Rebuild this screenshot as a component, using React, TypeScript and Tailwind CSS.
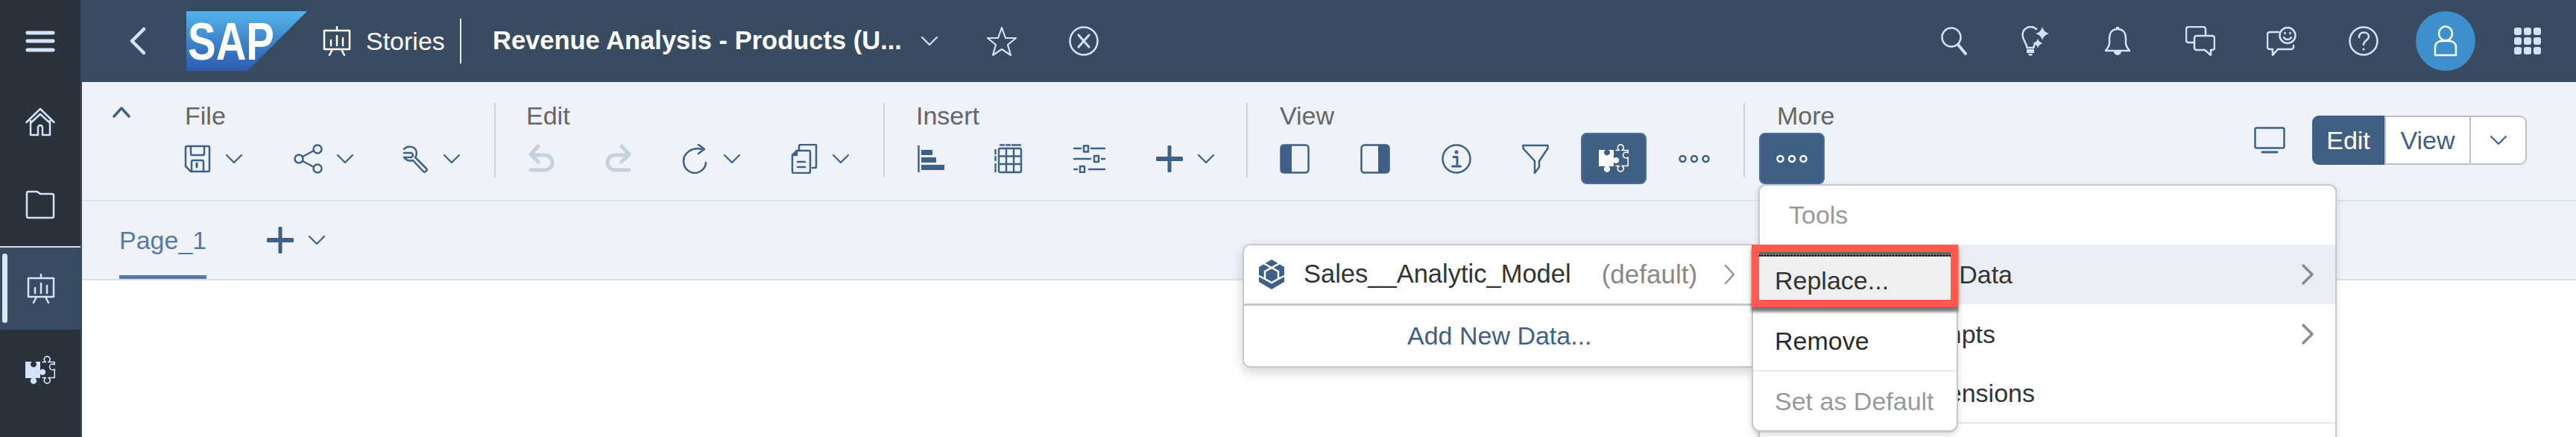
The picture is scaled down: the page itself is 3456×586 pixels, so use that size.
import type { ReactNode } from "react";

// Small wrapper so every drawn icon shares the same stroke defaults
const Ico = ({ w = 40, h = 40, sw = 2.5, className = "", children }: { w?: number; h?: number; sw?: number; className?: string; children: ReactNode }) => (
  <svg width={w} height={h} viewBox={`0 0 ${w} ${h}`} fill="none" stroke="currentColor" strokeWidth={sw} strokeLinecap="round" strokeLinejoin="round" className={`shrink-0 ${className}`}>
    {children}
  </svg>
);

const ChevDown = ({ className = "text-[#3f6086]" }: { className?: string }) => (
  <Ico w={24} h={14} sw={2.2} className={className}><path d="M2 2l10 10L22 2" /></Ico>
);

const Puzzle = () => (
  <Ico sw={1.6}>
    <path fill="currentColor" stroke="none" d="M0 8H9A4 4 0 1 0 13 8H20V19.500A4 4 0 1 1 20 24.500V30H13A4.200 4.200 0 1 1 9 30H0Z" />
    <path d="M23 8.500H27.500A4 4 0 1 1 31 8.500H39.200V12A4 4 0 1 0 39.200 18V29.500H31A4 4 0 1 1 27.500 29.500H23" />
  </Ico>
);

const Presentation = () => (
  <Ico w={38}>
    <path d="M19 1v4M2 6h34v25H2zM11 19v7M19 13v13M27 16v10M13 31l-4 8M25 31l4 8" />
  </Ico>
);

const Save = () => (
  <Ico w={36} h={38}>
    <path d="M2 4a2 2 0 0 1 2-2h28a2 2 0 0 1 2 2v30a2 2 0 0 1-2 2H9l-7-7z" />
    <path d="M9 3v9a2 2 0 0 0 2 2h14a2 2 0 0 0 2-2V3M10 36V23a2 2 0 0 1 2-2h12a2 2 0 0 1 2 2v13" />
    <path d="M17 25v5" strokeWidth={3} />
  </Ico>
);

const Share = () => (
  <Ico w={40}>
    <circle cx="7" cy="20" r="5.5" /><circle cx="32" cy="7" r="5.5" /><circle cx="32" cy="33" r="5.5" />
    <path d="M12 17l15-8M12 23l15 8" />
  </Ico>
);

const Wrench = () => (
  <Ico w={36} h={38}>
    <path d="M3 6C7 1 19 1 20 11c0 2-.5 4-2 6l15 15a2 2 0 0 1 0 3l-1 1a2 2 0 0 1-3 0L15 21c-4 1-9 0-12-4h9a3 3 0 0 0 0-6H3" />
  </Ico>
);

const Undo = () => (
  <Ico w={36} sw={5} className="text-[#c6d1dd]"><path d="M14 3L4 14l10 10M5 15h18a9 9 0 0 1 0 20H4" /></Ico>
);
const Redo = () => (
  <Ico w={36} sw={5} className="text-[#c6d1dd]"><path d="M22 3l10 11-10 10M31 15H13a9 9 0 0 0 0 20h19" /></Ico>
);

const Refresh = () => (
  <Ico w={36}>
    <path d="M26 7C14 4 2 12 2 23c0 9 7 16 15 16s15-7 15-14" />
    <path d="M22 1l8 6-8 6" />
  </Ico>
);

const Copy = () => (
  <Ico w={36}>
    <path d="M2 15l6-6h16a2 2 0 0 1 2 2v26a2 2 0 0 1-2 2H4a2 2 0 0 1-2-2z" />
    <path d="M11 9V3a2 2 0 0 1 2-2h20a1 1 0 0 1 1 1v29a1 1 0 0 1-1 1h-4" />
    <path d="M8 9v6H2" fill="currentColor" />
    <path d="M9 24h10M9 31h10" />
  </Ico>
);

const BarsIcon = () => (
  <Ico w={36} h={36}>
    <path d="M1.5 1v34" />
    <path fill="currentColor" stroke="none" d="M5 6h15v7H5zM5 16h20v7H5zM5 26h31v7H5z" />
  </Ico>
);

const TableIcon = () => (
  <Ico w={38} h={40} sw={2.4}>
    <rect x="6" y="6" width="30" height="32" rx="2" />
    <path d="M16 6v32M26 6v32M6 16.5h30M6 27h30" />
    <path d="M8 1.5h5M16 1.5h5M24 1.5h5M31 1.5h4M1.5 8v5M1.5 17v5M1.5 27v5M1.5 34v3" />
  </Ico>
);

const Sliders = () => (
  <Ico w={44} h={38}>
    <path d="M1 5h9M24 5h18M1 19h22M38 19h4M1 33h4M21 33h21" />
    <rect x="14" y="1.5" width="6" height="8" /><rect x="28" y="15" width="6" height="8" /><rect x="9" y="29" width="6" height="8" />
  </Ico>
);

const PlusIcon = () => (
  <svg width="36" height="36" viewBox="0 0 36 36" className="shrink-0 text-[#3f6086]" fill="currentColor">
    <rect x="0" y="15" width="36" height="6" rx="1.5" /><rect x="15.5" y="0" width="5" height="36" rx="1.5" />
  </svg>
);

const PanelLeft = () => (
  <Ico>
    <rect x="1.5" y="1.5" width="37" height="37" rx="4" />
    <path fill="currentColor" stroke="none" d="M5 1.5h11v37H5a3.5 3.5 0 0 1-3.500-3.500v-30A3.500 3.500 0 0 1 5 1.500z" />
  </Ico>
);
const PanelRight = () => (
  <Ico>
    <rect x="1.5" y="1.5" width="37" height="37" rx="4" />
    <path fill="currentColor" stroke="none" d="M35 1.5H24v37h11a3.500 3.500 0 0 0 3.500-3.500v-30A3.500 3.500 0 0 0 35 1.500z" />
  </Ico>
);

const Info = () => (
  <Ico>
    <circle cx="20" cy="20" r="18.500" />
    <circle cx="20" cy="11" r="2.500" fill="currentColor" stroke="none" />
    <path d="M16 17.500h5v12M14.500 30h11" strokeWidth={3} />
  </Ico>
);

const Funnel = () => (
  <Ico w={36}>
    <path d="M1.500 2h33v4L23 23v8l-6 8V23L1.500 6z" />
  </Ico>
);

const Dots = () => (
  <Ico w={42} h={14}>
    <circle cx="5.500" cy="7" r="4" /><circle cx="21" cy="7" r="4" /><circle cx="36.500" cy="7" r="4" />
  </Ico>
);

const Monitor = () => (
  <Ico w={42} h={36}>
    <rect x="1.500" y="1.500" width="39" height="27" rx="2" />
    <path d="M11 34h20" strokeWidth={3} />
  </Ico>
);

const Sparkle = ({ x, y, r }: { x: number; y: number; r: number }) => (
  <path fill="currentColor" stroke="none" d={`M${x} ${y - r}Q${x + r * 0.2} ${y - r * 0.2} ${x + r} ${y}Q${x + r * 0.2} ${y + r * 0.2} ${x} ${y + r}Q${x - r * 0.2} ${y + r * 0.2} ${x - r} ${y}Q${x - r * 0.2} ${y - r * 0.2} ${x} ${y - r}z`} />
);

// One toolbar tool: the fixed width keeps the icons on the same rhythm as the original ribbon
const Tool = ({ width, icon, chevron }: { width: string; icon: ReactNode; chevron?: boolean }) => (
  <div className={`flex items-center h-[40px] ${width}`}>
    <div className="w-[40px] flex items-center justify-center text-[#3f6086]">{icon}</div>
    {chevron && <div className="ml-[17px]"><ChevDown /></div>}
  </div>
);

const Sep = () => <div className="w-[2px] h-[100px] mt-[28px] bg-[#cdd2d9] shrink-0" />;

const Label = ({ children }: { children: ReactNode }) => (
  <div className="h-[40px] leading-[40px] text-[34px] text-[#666666]">{children}</div>
);

const HeaderIcon = ({ box, children }: { box: string; children: ReactNode }) => (
  <div className={`flex items-center justify-center ${box}`}>{children}</div>
);

export default function App() {
  return (
    <div className="relative w-[3456px] h-[586px] overflow-hidden flex bg-white font-['Liberation_Sans',sans-serif]">
      {/* Left rail */}
      <aside className="w-[110px] shrink-0 bg-[#2a323b] text-[#d1e4fb] flex flex-col border-r-[2px] border-[#3a4a60]">
        <div className="h-[110px] flex items-center justify-center">
          <Ico h={30} sw={5}><path d="M3 4h34M3 15h34M3 27h34" /></Ico>
        </div>
        <div className="h-[108px] flex items-center justify-center">
          <Ico>
            <path d="M1.500 20L20 2l18.500 18" />
            <path d="M7 18v19h10V27a3 3 0 0 1 6 0v10h10V18M20 9L7 21M20 9l13 12" />
          </Ico>
        </div>
        <div className="h-[112px] flex items-center justify-center">
          <Ico>
            <path d="M2 5a2 2 0 0 1 2-2h12l4 3h16a2 2 0 0 1 2 2v28a2 2 0 0 1-2 2H4a2 2 0 0 1-2-2z" />
          </Ico>
        </div>
        <div className="h-[2px] bg-[#dcdcdc]" />
        <div className="h-[110px] bg-[#394b61] -mr-[2px] flex items-center justify-center relative">
          <div className="absolute left-[3px] top-[8px] w-[7px] h-[93px] rounded-full bg-[#d9e8fb]" />
          <Presentation />
        </div>
        <div className="h-[110px] flex items-center justify-center">
          <Puzzle />
        </div>
      </aside>

      <main className="flex-1 flex flex-col min-w-0">
        {/* Shell bar */}
        <header className="h-[110px] bg-[#394b61] flex items-center text-[#d1e4fb] shrink-0">
          <div className="ml-[63px]">
            <Ico w={24} h={38} sw={4.500}><path d="M20 3L4 19l16 16" /></Ico>
          </div>
          <svg width="162" height="80" viewBox="0 0 162 80" className="ml-[53px] shrink-0">
            <defs>
              <linearGradient id="sapGrad" x1="0" y1="0" x2="0" y2="1">
                <stop offset="0" stopColor="#52b5ea" />
                <stop offset="0.55" stopColor="#3d7fc8" />
                <stop offset="1" stopColor="#2f5aae" />
              </linearGradient>
            </defs>
            <polygon points="0,0 162,0 82,80 0,80" fill="url(#sapGrad)" />
            <text x="2" y="65" textLength="116" lengthAdjust="spacingAndGlyphs" fill="#ffffff" fontFamily="Liberation Sans" fontWeight="700" fontSize="70">SAP</text>
          </svg>
          <div className="ml-[21px] text-white"><Presentation /></div>
          <span className="ml-[20px] w-[106px] text-[34px] text-white whitespace-nowrap">Stories</span>
          <div className="ml-[20px] w-[2px] h-[60px] bg-[#e6edf5]" />
          <span className="ml-[42px] w-[550px] text-[34.5px] font-bold text-white whitespace-nowrap">Revenue Analysis - Products (U...</span>
          <div className="ml-[24px]"><ChevDown className="text-[#d1e4fb]" /></div>
          <div className="ml-[65px]">
            <Ico sw={2.200}><path d="M20 2l5 14h14l-11 9 4 14-12-8-12 8 4-14L1 16h14z" /></Ico>
          </div>
          <div className="ml-[70px]">
            <Ico sw={2.500}><circle cx="20" cy="20" r="18.500" /><path d="M13 12l14 16M27 12L13 28" strokeWidth={3} /></Ico>
          </div>

          <div className="ml-auto flex items-center mr-[47px]">
            <HeaderIcon box="w-[36px]">
              <Ico w={36} h={38}><circle cx="14" cy="14" r="12.500" /><path d="M23 24l10 12" strokeWidth={4} /></Ico>
            </HeaderIcon>
            <HeaderIcon box="w-[40px] ml-[72px]">
              <Ico>
                <path d="M20 4A11 11 0 0 0 1.500 12c0 7 5 9 6 17h9c0-3 1-4 2-6" />
                <path fill="currentColor" stroke="none" d="M7 31h10v5H7zM9 37h6l-1 2.500h-4z" />
                <Sparkle x={28} y={10} r={9} />
                <Sparkle x={22} y={23} r={6.500} />
              </Ico>
            </HeaderIcon>
            <HeaderIcon box="w-[36px] ml-[71px]">
              <Ico w={36}>
                <path d="M18 4C10 4 7 10 7 16v7c0 4-3 7-5 10h32c-2-3-5-6-5-10v-7c0-6-3-12-11-12z" />
                <path fill="currentColor" stroke="none" d="M13 34h10a5 5 0 0 1-10 0zM16 1h4v3h-4z" />
              </Ico>
            </HeaderIcon>
            <HeaderIcon box="w-[40px] ml-[73px]">
              <Ico>
                <path d="M12 22H4a3 3 0 0 1-3-3V4a3 3 0 0 1 3-3h20a3 3 0 0 1 3 3v7" />
                <path d="M15 13h21a3 3 0 0 1 3 3v13a3 3 0 0 1-3 3h-2v7l-8-7H15a3 3 0 0 1-3-3V16a3 3 0 0 1 3-3z" />
              </Ico>
            </HeaderIcon>
            <HeaderIcon box="w-[40px] ml-[69px]">
              <Ico>
                <circle cx="28" cy="12.500" r="10.500" />
                <path d="M23 15c2 4 8 4 10 0M24.500 9v1M31.500 9v1" />
                <path d="M16 8H4a3 3 0 0 0-3 3v17a3 3 0 0 0 3 3h4v8l7-8h18a3 3 0 0 0 3-3v-2" />
              </Ico>
            </HeaderIcon>
            <HeaderIcon box="w-[40px] ml-[70px]">
              <Ico>
                <circle cx="20" cy="20" r="18.500" />
                <path d="M14 15c0-9 13-8 13-1 0 5-7 5-7 11" />
                <circle cx="20" cy="31" r="1.500" fill="currentColor" stroke="none" />
              </Ico>
            </HeaderIcon>
            <div className="ml-[50px] w-[80px] h-[80px] rounded-full bg-[#3f8fcd] flex items-center justify-center text-white">
              <Ico w={32} h={42}>
                <ellipse cx="16" cy="11" rx="9" ry="9.500" />
                <path d="M2 40V29c0-5 4-8 9-8h10c5 0 9 3 9 8v11z" />
              </Ico>
            </div>
            <div className="ml-[52px] grid grid-cols-3 gap-[3px]">
              {Array.from({ length: 9 }).map((_, i) => (
                <div key={i} className="w-[10px] h-[10px] rounded-[3px] bg-[#d1e4fb]" />
              ))}
            </div>
          </div>
        </header>

        {/* Ribbon */}
        <section className="h-[160px] shrink-0 bg-[#eff3f9] border-b-[2px] border-[#d7e3f0] flex">
          <div className="w-[135px] shrink-0 pl-[41px] pt-[32px]">
            <Ico w={24} h={16} sw={3.500} className="text-[#3f6086]"><path d="M2 14L12 3l10 11" /></Ico>
          </div>

          <div className="w-[418px] shrink-0 pt-[25px]">
            <div className="pl-[3px]"><Label>File</Label></div>
            <div className="flex mt-[18px]">
              <Tool width="w-[149px]" icon={<Save />} chevron />
              <Tool width="w-[143px]" icon={<Share />} chevron />
              <Tool width="w-[100px]" icon={<Wrench />} chevron />
            </div>
          </div>
          <Sep />

          <div className="w-[520px] shrink-0 pl-[41px] pt-[25px]">
            <Label>Edit</Label>
            <div className="flex mt-[18px]">
              <Tool width="w-[104px]" icon={<Undo />} />
              <Tool width="w-[103px]" icon={<Redo />} />
              <Tool width="w-[146px]" icon={<Refresh />} chevron />
              <Tool width="w-[100px]" icon={<Copy />} chevron />
            </div>
          </div>
          <Sep />

          <div className="w-[485px] shrink-0 pl-[42px] pt-[25px]">
            <Label>Insert</Label>
            <div className="flex mt-[18px]">
              <Tool width="w-[104px]" icon={<BarsIcon />} />
              <Tool width="w-[109px]" icon={<TableIcon />} />
              <Tool width="w-[107px]" icon={<Sliders />} />
              <Tool width="w-[90px]" icon={<PlusIcon />} chevron />
            </div>
          </div>
          <Sep />

          <div className="w-[665px] shrink-0 pl-[43px] pt-[25px]">
            <Label>View</Label>
            <div className="flex mt-[18px]">
              <Tool width="w-[108px]" icon={<PanelLeft />} />
              <Tool width="w-[109px]" icon={<PanelRight />} />
              <Tool width="w-[106px]" icon={<Info />} />
              <Tool width="w-[105px]" icon={<Funnel />} />
              <div className="w-[108px] h-[40px] flex">
                <div className="w-[88px] h-[69px] -ml-[24px] -mt-[15px] rounded-[8px] bg-[#3f5f85] border-2 border-[#4a6f9c] text-white flex items-center justify-center shrink-0">
                  <Puzzle />
                </div>
              </div>
              <Tool width="w-[42px]" icon={<Dots />} />
            </div>
          </div>
          <Sep />

          <div className="pl-[43px] pt-[25px] shrink-0">
            <Label>More</Label>
            <div className="-ml-[24px] mt-[3px] w-[88px] h-[69px] rounded-[8px] bg-[#3f5f85] border-2 border-[#4a6f9c] text-white flex items-center justify-center">
              <Dots />
            </div>
          </div>

          <div className="ml-auto flex items-start pt-[45px] pr-[66px] text-[#3f6086]">
            <div className="mt-[15px]"><Monitor /></div>
            <div className="ml-[36px] flex h-[66px] rounded-[9px] overflow-hidden text-[34px]">
              <div className="w-[97px] bg-[#3f5f85] text-white flex items-center justify-center">Edit</div>
              <div className="w-[114px] bg-white border-y-2 border-l-2 border-[#c0c0c0] flex items-center justify-center">View</div>
              <div className="w-[77px] bg-white border-2 border-[#c0c0c0] rounded-r-[9px] flex items-center justify-center"><ChevDown /></div>
            </div>
          </div>
        </section>

        {/* Page tabs */}
        <nav className="h-[106px] shrink-0 bg-[#eff3f9] border-b-[2px] border-[#d5e0ee] flex items-stretch pl-[50px]">
          <div className="w-[117px] h-[104px] border-b-[5px] border-[#5679a8] text-[34px] text-[#5679a8] pt-[30px] leading-[44px] whitespace-nowrap">Page_1</div>
          <div className="ml-[81px] flex items-center h-[104px]">
            <PlusIcon />
            <div className="ml-[19px]"><ChevDown /></div>
          </div>
        </nav>
        <div className="flex-1 bg-white" />
      </main>

      {/* More > Tools menu */}
      <div className="absolute left-[2359px] top-[247px] w-[776px] h-[400px] bg-white rounded-[10px] border-[2px] border-[#c8c8c8] text-[34px] text-[#333333] shadow-[0_2px_8px_rgba(0,0,0,0.15)]">
        <div className="h-[79px] flex items-center pl-[39px] text-[#999999]">Tools</div>
        <div className="h-[80px] bg-[#e9eef5] flex items-center justify-between pr-[28px]">
          <span className="w-[339px] text-right whitespace-nowrap">Story Data</span>
          <Ico w={18} h={30} sw={3.500} className="text-[#8a8a8a]"><path d="M3 3l12 12L3 27" /></Ico>
        </div>
        <div className="h-[80px] flex items-center justify-between pr-[28px]">
          <span className="w-[316px] text-right whitespace-nowrap">Prompts</span>
          <Ico w={18} h={30} sw={3.500} className="text-[#8a8a8a]"><path d="M3 3l12 12L3 27" /></Ico>
        </div>
        <div className="h-[80px] flex items-center border-b-[2px] border-[#e5e5e5]">
          <span className="w-[369px] text-right whitespace-nowrap">Dimensions</span>
        </div>
      </div>

      {/* Data source flyout */}
      <div className="absolute left-[1667px] top-[327px] w-[692px] h-[166px] bg-white rounded-[10px] border-[2px] border-[#c8c8c8] text-[34px] shadow-[0_6px_16px_rgba(0,0,0,0.18)] flex flex-col">
        <div className="h-[81px] flex items-center border-b-[3px] border-[#c8c8c8] pl-[19px]">
          <svg width="36" height="40" viewBox="0 0 36 40" className="shrink-0">
            <polygon points="18,0 35,10 35,30 18,40 1,30 1,10" fill="#3f6086" />
            <polygon points="18,11 27,16 27,26 18,31 9,26 9,16" fill="none" stroke="#ffffff" strokeWidth="2.500" />
            <path d="M7 5l11 6 11-6M1 22l8 4M35 22l-8 4" fill="none" stroke="#ffffff" strokeWidth="2.500" />
          </svg>
          <span className="ml-[25px] text-[34.5px] text-[#333333] whitespace-nowrap">Sales__Analytic_Model</span>
          <span className="ml-[41px] text-[35px] text-[#888888] whitespace-nowrap">(default)</span>
          <Ico w={16} h={30} sw={2} className="ml-[36px] text-[#888888]"><path d="M2 3l11 12L2 27" /></Ico>
        </div>
        <div className="flex-1 flex items-center pl-[219px] text-[#3f5f85]">Add New Data...</div>
      </div>

      {/* Replace / Remove flyout, the first row carries the red tutorial highlight */}
      <div className="absolute left-[2350px] top-[328px] w-[277px] h-[252px] bg-white rounded-b-[12px] border-x-[2px] border-b-[3px] border-[#c8c8c8] text-[34px] text-[#333333] shadow-[0_3px_8px_rgba(0,0,0,0.15)]">
        <div className="-mx-[2px] h-[84px] border-[10px] border-[#ff5a4c] bg-[#efefef] pl-[21px] shadow-[0_6px_4px_rgba(0,0,0,0.55)] relative">
          <div className="absolute inset-x-0 top-0 h-[6px] bg-[#666666] border-b-2 border-dotted border-black" />
          <div className="h-[64px] pt-[12px] leading-[52px] whitespace-nowrap">Replace...</div>
        </div>
        <div className="h-[86px] flex items-center pt-[6px] pl-[29px] border-b-[2px] border-[#e8e8e8] text-[#2b2b2b] whitespace-nowrap">Remove</div>
        <div className="h-[80px] flex items-center pl-[29px] text-[#999999] whitespace-nowrap">Set as Default</div>
      </div>
    </div>
  );
}
